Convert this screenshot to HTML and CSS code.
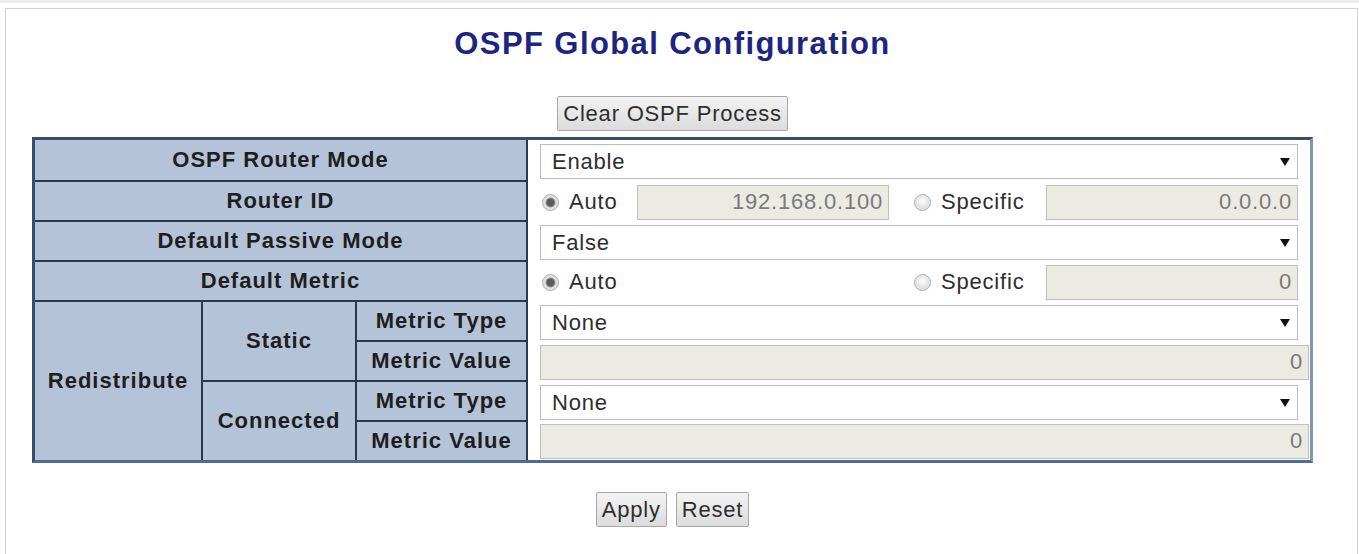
FILE: index.html
```html
<!DOCTYPE html>
<html lang="en">
<head>
<meta charset="utf-8">
<title>OSPF Global Configuration</title>
<link rel="stylesheet" href="styles.css">
</head>
<body>
<div class="topline"></div>
<div class="frame">
  <div class="content">
    <h1 class="title">OSPF Global Configuration</h1>
    <div class="actions top-actions">
      <button class="btn" type="button">Clear OSPF Process</button>
    </div>
    <div class="config">
      <div class="th span3">OSPF Router Mode</div>
      <div class="td"><span class="sel"><select><option>Enable</option></select></span></div>

      <div class="th span3">Router ID</div>
      <div class="td">
        <div class="choice">
          <label class="opt"><input class="radio" type="radio" name="rid" checked>Auto</label>
          <input class="field" type="text" value="192.168.0.100" disabled>
          <label class="opt opt2"><input class="radio" type="radio" name="rid">Specific</label>
          <input class="field" type="text" value="0.0.0.0" disabled>
        </div>
      </div>

      <div class="th span3">Default Passive Mode</div>
      <div class="td"><span class="sel"><select><option>False</option></select></span></div>

      <div class="th span3">Default Metric</div>
      <div class="td">
        <div class="choice">
          <label class="opt"><input class="radio" type="radio" name="dm" checked>Auto</label>
          <span></span>
          <label class="opt opt2"><input class="radio" type="radio" name="dm">Specific</label>
          <input class="field" type="text" value="0" disabled>
        </div>
      </div>

      <div class="th redis last">Redistribute</div>
      <div class="th grp">Static</div>
      <div class="th">Metric Type</div>
      <div class="td"><span class="sel"><select><option>None</option></select></span></div>
      <div class="th">Metric Value</div>
      <div class="td"><input class="field wide" type="text" value="0" disabled></div>

      <div class="th grp last">Connected</div>
      <div class="th">Metric Type</div>
      <div class="td"><span class="sel"><select><option>None</option></select></span></div>
      <div class="th last">Metric Value</div>
      <div class="td"><input class="field wide" type="text" value="0" disabled></div>
    </div>
    <div class="actions bottom-actions">
      <button class="btn" type="button">Apply</button>
      <button class="btn" type="button">Reset</button>
    </div>
  </div>
</div>
</body>
</html>
```

FILE: styles.css
```css
html, body {
  margin: 0;
  padding: 0;
  height: 554px;
  overflow: hidden;
  background: #ffffff;
  font-family: "Liberation Sans", Arial, sans-serif;
  color: #2e2e2e;
}

.topline {
  height: 3px;
  background: #ededed;
}

.frame {
  margin: 5px 1px 0 5px;
  border: 1px solid #d2d2d2;
  border-bottom: none;
  height: 546px;
  box-sizing: border-box;
  padding-top: 19px;
}

.content {
  width: 1281px;
  margin-left: 26px;
}

.title {
  margin: 0;
  font-size: 31px;
  line-height: 32px;
  font-weight: bold;
  letter-spacing: 1.4px;
  color: #1d2580;
  text-align: center;
}

.actions {
  display: flex;
  justify-content: center;
  gap: 9px;
}

.top-actions {
  margin-top: 36px;
}

.bottom-actions {
  margin-top: 29px;
}

.btn {
  height: 35px;
  margin: 0;
  padding: 0 5px;
  font-family: "Liberation Sans", Arial, sans-serif;
  font-size: 22px;
  letter-spacing: 0.8px;
  color: #2e2e2e;
  background: linear-gradient(#f3f3f3, #dcdcdc);
  border: 1px solid #a8a8a8;
  border-radius: 2px;
}

.config {
  margin-top: 6px;
  display: grid;
  grid-template-columns: 168px 154px 171px 782px;
  grid-template-rows: 42px repeat(6, 40px) 38px;
  width: 1281px;
  box-sizing: border-box;
  border: 3px solid #3a4c69;
  border-right-color: #8196b5;
  border-bottom-color: #4e6d96;
}

.th {
  display: flex;
  align-items: center;
  justify-content: center;
  box-sizing: border-box;
  background: #b4c3d7;
  border-right: 2px solid #2b384b;
  border-bottom: 2px solid #2b384b;
  font-size: 22px;
  font-weight: bold;
  letter-spacing: 1px;
  color: #1e1e1e;
  white-space: nowrap;
}

.th.last {
  border-bottom: none;
}

.span3 {
  grid-column: 1 / 4;
}

.redis {
  grid-row: span 4;
}

.grp {
  grid-row: span 2;
}

.td {
  display: flex;
  align-items: center;
  padding-left: 12px;
  background: #ffffff;
  min-width: 0;
}

.sel {
  position: relative;
  display: block;
  width: calc(100% - 12px);
  height: 35px;
}

.sel select {
  -webkit-appearance: none;
  appearance: none;
  display: block;
  width: 100%;
  height: 100%;
  margin: 0;
  padding: 0 0 0 11px;
  box-sizing: border-box;
  border: 1px solid #bdbdbd;
  border-radius: 0;
  background: #ffffff;
  font-family: "Liberation Sans", Arial, sans-serif;
  font-size: 22px;
  letter-spacing: 0.8px;
  color: #2e2e2e;
}

.sel::after {
  content: "";
  position: absolute;
  right: 8px;
  top: 50%;
  margin-top: -3px;
  border-left: 5px solid transparent;
  border-right: 5px solid transparent;
  border-top: 8px solid #111111;
  pointer-events: none;
}

.choice {
  display: grid;
  grid-template-columns: 97px 252px 157px 252px;
  align-items: center;
}

.opt {
  display: flex;
  align-items: center;
  font-size: 22px;
  letter-spacing: 0.8px;
  color: #2e2e2e;
}

.opt2 {
  padding-left: 23px;
}

.radio {
  -webkit-appearance: none;
  appearance: none;
  flex: none;
  width: 17px;
  height: 17px;
  margin: 0 10px 0 2px;
  box-sizing: border-box;
  border: 1px solid #b0b0b0;
  border-radius: 50%;
  background: radial-gradient(circle at 50% 40%, #fbfbfb, #d2d2d2);
}

.radio:checked {
  background: radial-gradient(circle, #5a5a5a 0 3.5px, #999999 4.5px, #e4e4e4 5.5px, #cfcfcf 100%);
}

.field {
  display: block;
  height: 35px;
  width: 100%;
  margin: 0;
  padding: 0 5px 0 0;
  box-sizing: border-box;
  border: 1px solid #bfbfbf;
  border-radius: 0;
  background: #ebebe4;
  font-family: "Liberation Sans", Arial, sans-serif;
  font-size: 22px;
  letter-spacing: 0.8px;
  color: #7a7a7a;
  -webkit-text-fill-color: #7a7a7a;
  text-align: right;
}

.field.wide {
  width: calc(100% - 1px);
}
```
